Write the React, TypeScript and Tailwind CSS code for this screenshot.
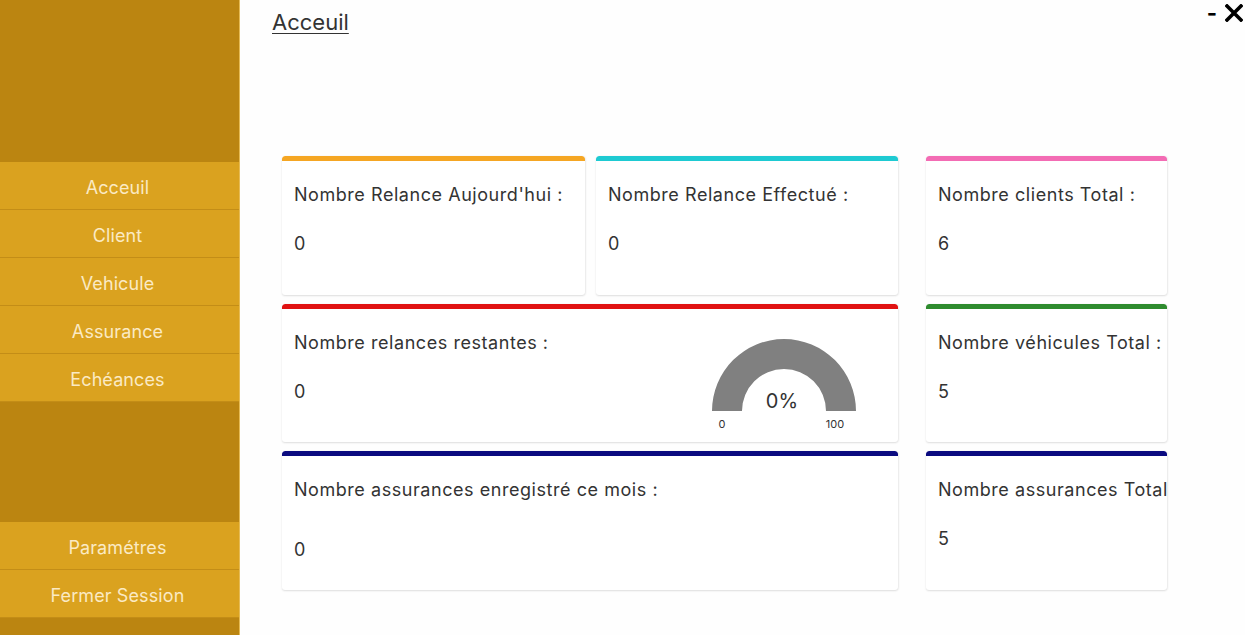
import React from "react";

const font = { fontFamily: "Inter, 'Noto Sans', sans-serif" };

function SideItem({ label }: { label: string }) {
  return (
    <div className="h-[48px] pt-[3px] pr-[4px] flex items-center justify-center bg-[#daa21f] border-b border-[#c38d17] text-[#fbeac4] text-[18px] tracking-[0.1px]">
      {label}
    </div>
  );
}

function Card({
  color,
  title,
  value,
  h,
  valueGap = 27,
  children,
  className = "",
}: {
  color: string;
  title: string;
  value: string;
  h: string;
  valueGap?: number;
  children?: React.ReactNode;
  className?: string;
}) {
  return (
    <div className={`${h} ${className} flex flex-col bg-white rounded-[3px] shadow-[0_1px_2px_rgba(0,0,0,0.12),1px_0_2px_rgba(0,0,0,0.05)] overflow-hidden`}>
      <div className={`h-[5px] rounded-t-[3px] ${color}`} />
      <div className="flex flex-1 min-h-0">
        <div className="flex-1 min-w-0 pl-[12px] pt-[23px] text-[#333] text-[18px] tracking-[0.55px] whitespace-nowrap overflow-hidden">
          <div className="leading-[22px]">{title}</div>
          <div className="leading-[22px]" style={{ marginTop: valueGap }}>{value}</div>
        </div>
        {children}
      </div>
    </div>
  );
}

function Gauge() {
  return (
    <svg width="160" height="100" viewBox="0 0 160 100" className="mt-[26px] mr-[34px] shrink-0">
      <path d="M 8 76 A 72 72 0 0 1 152 76 L 122 76 A 42 42 0 0 0 38 76 Z" fill="#808080" />
      <text x="78" y="73" textAnchor="middle" fontSize="20" fill="#333" fontFamily="Inter, sans-serif">0%</text>
      <text x="18" y="93" textAnchor="middle" fontSize="11" fill="#333" fontFamily="Inter, sans-serif">0</text>
      <text x="131" y="93" textAnchor="middle" fontSize="11" fill="#333" fontFamily="Inter, sans-serif">100</text>
    </svg>
  );
}

export default function App() {
  return (
    <div className="w-[1245px] h-[635px] flex bg-[#fefefe] overflow-hidden" style={font}>
      <aside className="w-[240px] h-full flex flex-col bg-[#bb8511] border-r border-[#e6bb55] shrink-0">
        <div className="h-[162px]" />
        <SideItem label="Acceuil" />
        <SideItem label="Client" />
        <SideItem label="Vehicule" />
        <SideItem label="Assurance" />
        <SideItem label="Echéances" />
        <div className="h-[120px]" />
        <SideItem label="Paramétres" />
        <SideItem label="Fermer Session" />
      </aside>
      <main className="flex-1 flex flex-col relative">
        <div className="flex justify-between items-start h-[156px]">
          <div className="ml-[32px] mt-[6px] text-[22px] text-[#333] underline underline-offset-[3px] decoration-1">Acceuil</div>
          <div className="flex items-center gap-[8px] mt-[2px] mr-[2px]">
            <span className="text-[22px] font-bold text-black leading-none">-</span>
            <svg width="18" height="18" viewBox="0 0 18 18">
              <path d="M2 2 L16 16 M16 2 L2 16" stroke="#000" strokeWidth="3.6" strokeLinecap="square" />
            </svg>
          </div>
        </div>
        <div className="ml-[42px] flex gap-[28px]">
          <div className="w-[616px] flex flex-col gap-[9px]">
            <div className="flex gap-[11px]">
              <Card className="w-[303px]" h="h-[139px]" color="bg-[#f5a623]" title="Nombre Relance Aujourd'hui :" value="0" />
              <Card className="w-[302px]" h="h-[139px]" color="bg-[#1ecad2]" title="Nombre Relance Effectué :" value="0" />
            </div>
            <Card h="h-[138px]" color="bg-[#e01212]" title="Nombre relances restantes :" value="0">
              <Gauge />
            </Card>
            <Card h="h-[139px]" color="bg-[#0b0b80]" title="Nombre assurances enregistré ce mois :" value="0" valueGap={38} />
          </div>
          <div className="w-[241px] flex flex-col gap-[9px]">
            <Card h="h-[139px]" color="bg-[#f36cb4]" title="Nombre clients Total :" value="6" />
            <Card h="h-[138px]" color="bg-[#2e8b2e]" title="Nombre véhicules Total :" value="5" />
            <Card h="h-[139px]" color="bg-[#0b0b80]" title="Nombre assurances Total" value="5" />
          </div>
        </div>
      </main>
    </div>
  );
}
